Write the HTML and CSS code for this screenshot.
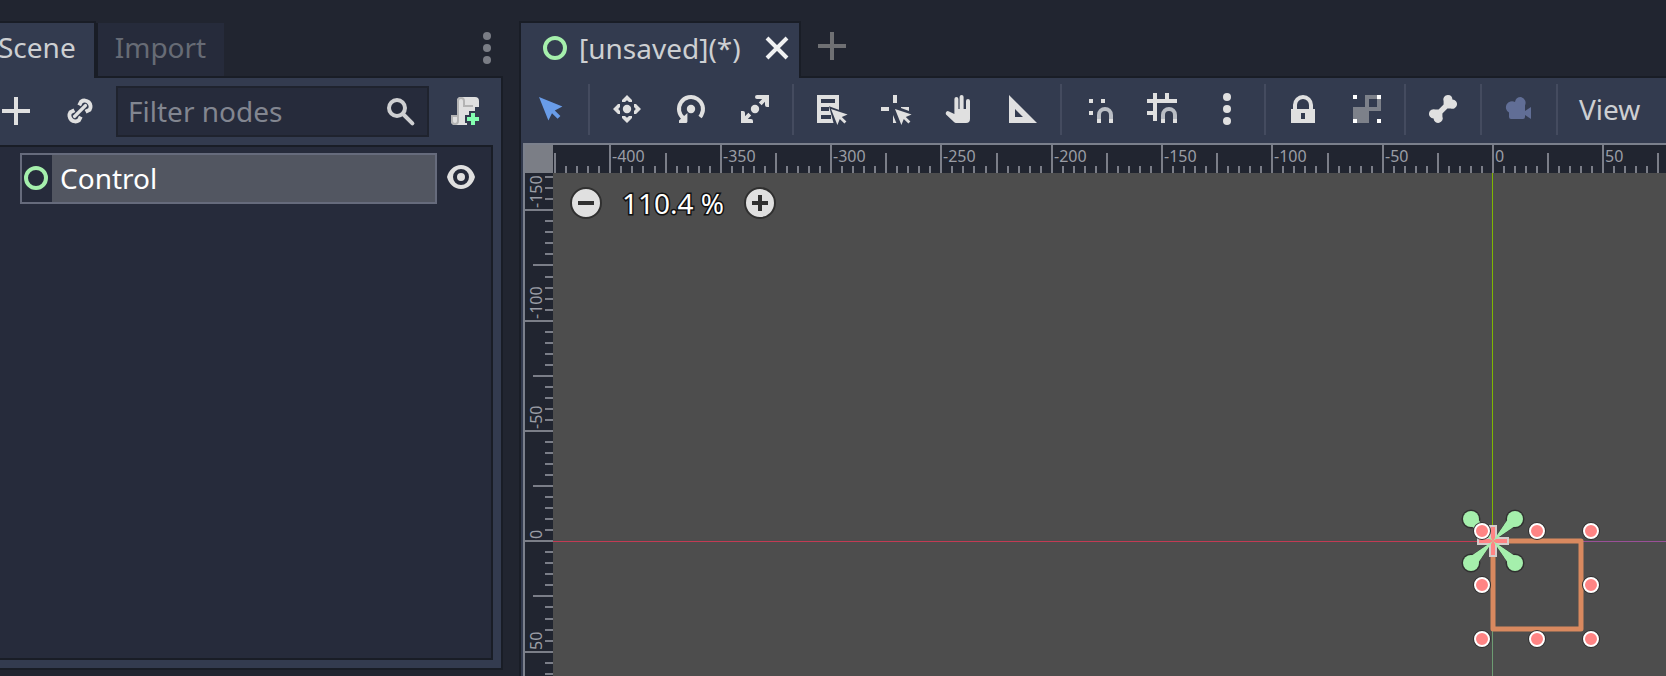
FILE: index.html
```html
<!DOCTYPE html>
<html lang="en">
<head>
<meta charset="utf-8">
<title>Scene editor</title>
<link rel="stylesheet" href="styles.css">
</head>
<body>
<main class="editor">
  <section class="dock" aria-label="Scene dock">
    <nav class="tabs">
      <button class="tab tab-active tab-scene">Scene</button>
      <button class="tab tab-idle">Import</button>
      <span class="tab-rest">
        <button class="icon-btn dim" aria-label="Dock options"><svg class="icon" viewBox="0 0 16 16"><circle cx="8" cy="2" r="2"/><circle cx="8" cy="8" r="2"/><circle cx="8" cy="14" r="2"/></svg></button>
      </span>
    </nav>
    <div class="dock-body">
      <div class="dock-tools">
        <button class="icon-btn" aria-label="Add node"><svg class="icon" viewBox="0 0 16 16"><path d="M7 1h2v6h6v2H9v6H7V9H1V7h6z"/></svg></button>
        <button class="icon-btn" aria-label="Instance scene"><svg class="icon" viewBox="0 0 16 16"><g fill="none" stroke="currentColor" stroke-width="2"><path d="M7.600 5.200 8.600 3.300A3 3 0 0 1 12.800 7.400L10.800 8.400"/><path d="M8.400 10.800 7.400 12.700A3 3 0 0 1 3.200 8.600L5.200 7.600"/><path d="M5.300 10.700 10.700 5.300" stroke-linecap="round" stroke-width="1.700"/></g></svg></button>
        <label class="filter">
          <input class="filter-input" type="text" placeholder="Filter nodes" aria-label="Filter nodes">
          <svg class="icon search" viewBox="0 0 16 16"><g fill="none" stroke="currentColor" stroke-width="2"><circle cx="6" cy="6" r="4"/><path d="m9 9 4.700 4.700" stroke-linecap="round"/></g></svg>
        </label>
        <button class="icon-btn" aria-label="Attach script"><svg class="icon" viewBox="0 0 16 16"><path d="M6 1a2 2 0 0 0-2 2v7H1v3a2 2 0 0 0 2 2h6v-5h1V9h1V8h2V6h2V3a2 2 0 0 0-2-2z"/><path class="ink-shade" fill-rule="evenodd" d="M6 1a2 2 0 0 0-2 2v7H1v3a2 2 0 0 0 4 0V3a1 1 0 0 1 2 0v3h5V5H8V3a2 2 0 0 0-2-2zM2 11h2v2a1 1 0 0 1-2 0z"/><path class="ink-add" d="M11 9h2v2h2v2h-2v2h-2v-2H9v-2h2z"/></svg></button>
      </div>
      <ul class="tree">
        <li class="tree-row">
          <button class="tree-item"><span class="tree-icon"><svg class="icon node" viewBox="0 0 16 16"><circle cx="8" cy="8" r="5"/></svg></span><span class="tree-name">Control</span></button>
          <button class="icon-btn eye" aria-label="Toggle visibility"><svg class="icon" viewBox="0 0 16 16"><path fill-rule="evenodd" d="M8 2C4.500 2 1.900 4.700 1 8c.9 3.300 3.500 6 7 6s6.100-2.700 7-6c-.9-3.300-3.500-6-7-6zm0 2a4 4 0 1 1 0 8 4 4 0 0 1 0-8zm0 2a2 2 0 1 0 0 4 2 2 0 0 0 0-4z"/></svg></button>
        </li>
      </ul>
    </div>
  </section>

  <section class="workspace" aria-label="2D workspace">
    <nav class="tabs">
      <div class="tab tab-active tab-file">
        <svg class="icon node" viewBox="0 0 16 16"><circle cx="8" cy="8" r="5"/></svg>
        <span class="file-name">[unsaved](*)</span>
        <button class="icon-btn close" aria-label="Close tab"><svg class="icon" viewBox="0 0 16 16"><path d="m3 3 10 10M13 3 3 13" stroke="currentColor" stroke-width="2"/></svg></button>
      </div>
      <span class="tab-rest tab-rest-start">
        <button class="icon-btn dim" aria-label="New scene"><svg class="icon" viewBox="0 0 16 16"><path d="M7 1h2v6h6v2H9v6H7V9H1V7h6z"/></svg></button>
      </span>
    </nav>
    <div class="toolbar" role="toolbar" aria-label="Canvas tools">
      <div class="group group-first">
        <button class="icon-btn active" aria-label="Select"><svg class="icon" viewBox="0 0 16 16"><path d="m2 2 4.700 11.700 1.800-3.600 2.800 2.800 1.400-1.400L9.900 8.700l3.800-1.900z"/></svg></button>
      </div>
      <div class="group">
        <button class="icon-btn" aria-label="Move"><svg class="icon" viewBox="0 0 16 16"><circle cx="8" cy="8" r="2.100"/><path d="M8 1 5.500 3.500v1H7L8 3.600l1 .9h1.500v-1zM8 15l2.500-2.500v-1H9l-1 .9-1-.9H5.500v1zM1 8l2.500 2.500h1V9L3.600 8l.9-1V5.500h-1zM15 8l-2.500-2.500h-1V7l.9 1-.9 1v1.500h1z"/></svg></button>
        <button class="icon-btn" aria-label="Rotate"><svg class="icon" viewBox="0 0 16 16"><circle cx="8" cy="8" r="2.100"/><path d="M4.500 12.900A6 6 0 1 1 13.200 11M13.200 11a6 6 0 0 1-.7 1" fill="none" stroke="currentColor" stroke-width="2"/><path d="M6.200 10v4.200a.8.8 0 0 1-.8.8H2v-1.300z"/></svg></button>
        <button class="icon-btn" aria-label="Scale"><svg class="icon" viewBox="0 0 16 16"><circle cx="8" cy="8" r="2.100"/><path d="M9 1h6v6h-1a1 1 0 0 1-1-1V4.400l-1.700 1.700-1.400-1.400L11.600 3H9a1 1 0 0 1-1-1 1 1 0 0 1 1-1zM7 15H1V9h1a1 1 0 0 1 1 1v1.600l1.700-1.700 1.400 1.400L4.400 13H6a1 1 0 0 1 1 1z"/></svg></button>
      </div>
      <div class="group">
        <button class="icon-btn" aria-label="List selection"><svg class="icon" viewBox="0 0 16 16"><path d="M1 1h11v14H1z"/><path class="ink-gap" d="M3 3h7v2H3zM3 7h4v2H3zM3 11h5v2H3zM7 6.600 12.500 8.600V15.500H9.400z"/><path d="m8 8 3.200 8 1.200-3 2.300 2.300 1-1-2.300-2.300 2.900-1.200z"/></svg></button>
        <button class="icon-btn" aria-label="Change pivot"><svg class="icon" viewBox="0 0 16 16"><path d="M7 1h2v4H7zM1 7h4v2H1zM11 7h4v2l-4-1.500zM7 11l1.700 4H7z"/><path d="m8 8 3.200 8 1.200-3 2.300 2.300 1-1-2.300-2.300 2.900-1.200z"/></svg></button>
        <button class="icon-btn" aria-label="Pan"><svg class="icon" viewBox="0 0 16 16"><path d="M9.300 1a1 1 0 0 0-1 1v6h-.6V3a1 1 0 0 0-2 0v7.500L3 9.200a1.100 1.100 0 0 0-1.500 1.500L5.500 14.500c.4.400.7.500 1.200.500H11.500a2 2 0 0 0 2-2V4a1 1 0 0 0-2 0v4h-.6l-.6 0V2a1 1 0 0 0-1-1z"/></svg></button>
        <button class="icon-btn" aria-label="Ruler"><svg class="icon" viewBox="0 0 16 16"><path fill-rule="evenodd" d="M1 1v14h14zm3 7 4 4H4z"/></svg></button>
      </div>
      <div class="group">
        <button class="icon-btn" aria-label="Smart snap"><svg class="icon" viewBox="0 0 16 16"><path d="M3 3h2v2H3zM9 3h2v2H9zM3 9h2v2H3zM7 13h2v2H7zM13 13h2v2h-2z"/><path class="ink-soft" d="M7 13v-2a4 4 0 0 1 8 0v2h-2v-2a2 2 0 0 0-4 0v2z"/></svg></button>
        <button class="icon-btn" aria-label="Grid snap"><svg class="icon" viewBox="0 0 16 16"><path d="M3 0h2v3h4V0h2v3h4v2H5v9H3v-3H0V9h3V5H0V3h3zM7 13h2v2H7zM13 13h2v2h-2z"/><path class="ink-soft" d="M7 13v-2a4 4 0 0 1 8 0v2h-2v-2a2 2 0 0 0-4 0v2z"/></svg></button>
        <button class="icon-btn" aria-label="Snap options"><svg class="icon" viewBox="0 0 16 16"><circle cx="8" cy="2" r="2"/><circle cx="8" cy="8" r="2"/><circle cx="8" cy="14" r="2"/></svg></button>
      </div>
      <div class="group">
        <button class="icon-btn" aria-label="Lock"><svg class="icon" viewBox="0 0 16 16"><path fill-rule="evenodd" d="M8 1a5 5 0 0 0-5 5v2H2v7h12V8h-1V6a5 5 0 0 0-5-5zm0 2a3 3 0 0 1 3 3v2H5V6a3 3 0 0 1 3-3zM7 10h2v3H7z"/></svg></button>
        <button class="icon-btn" aria-label="Group"><svg class="icon" viewBox="0 0 16 16"><path class="ink-grey" fill-rule="evenodd" d="M7 1h8v8H9v6H1V7h6zm2 2v4h4V3z"/><path class="ink-white" d="M1 1h2v2H1zM13 1h2v2h-2zM1 13h2v2H1zM13 13h2v2h-2z"/></svg></button>
      </div>
      <div class="group">
        <button class="icon-btn" aria-label="Skeleton"><svg class="icon" viewBox="0 0 16 16"><path d="M10.500 1a2.300 2.300 0 0 0-2.200 3.200v1.600L5.800 8.300H4.200a2.300 2.300 0 1 0-.9 4.400 2.300 2.300 0 1 0 4.400-1v-1.500l2.500-2.500h1.600a2.300 2.300 0 1 0 .9-4.400A2.300 2.300 0 0 0 10.500 1z"/></svg></button>
      </div>
      <div class="group">
        <button class="icon-btn off" aria-label="Override camera" disabled><svg class="icon" viewBox="0 0 16 16"><path d="M9 2a3 3 0 0 0-3 2.500A3 3 0 1 0 3 9.800V12a1 1 0 0 0 1 1h6a1 1 0 0 0 1-1v-1l3 2V7l-3 2V6.200A3 3 0 0 0 9 2z"/></svg></button>
      </div>
      <div class="group">
        <button class="view-menu">View</button>
      </div>
    </div>
    <div class="viewport">
      <div class="corner"></div>
      <svg class="ruler" id="ruler-x"></svg>
      <svg class="ruler" id="ruler-y"></svg>
      <div class="canvas">
        <svg class="scene" id="scene"></svg>
        <div class="zoom">
          <button class="zoom-btn" aria-label="Zoom out"><svg class="icon" viewBox="0 0 16 16"><circle class="disc" cx="8" cy="8" r="7.500"/><path d="M4 7h8v2H4z"/></svg></button>
          <button class="zoom-value">110.4 %</button>
          <button class="zoom-btn" aria-label="Zoom in"><svg class="icon" viewBox="0 0 16 16"><circle class="disc" cx="8" cy="8" r="7.500"/><path d="M7 4h2v3h3v2H9v3H7V9H4V7h3z"/></svg></button>
        </div>
      </div>
    </div>
  </section>
</main>
<script src="viewport.js"></script>
</body>
</html>
```
FILE: viewport.js
```js
const NS = "http://www.w3.org/2000/svg";
const SCALE = 2.2065;            // screen pixels per scene unit
const PAN = { x: 940, y: 368.3 }; // scene origin inside the canvas

function add(parent, tag, attrs, text) {
  const el = document.createElementNS(NS, tag);
  for (const key in attrs) el.setAttribute(key, attrs[key]);
  if (text !== undefined) el.textContent = text;
  parent.append(el);
  return el;
}

function drawRuler(svg, origin, vertical) {
  const length = vertical ? svg.clientHeight : svg.clientWidth;
  svg.replaceChildren();
  const first = Math.ceil((-origin - 1) / SCALE / 5);
  const last = Math.floor((length - origin) / SCALE / 5);
  for (let i = first; i <= last; i++) {
    const unit = i * 5;
    const at = Math.round(origin + unit * SCALE) - 1;
    const start = unit % 50 === 0 ? 0 : unit % 25 === 0 ? 8 : 21;
    const from = vertical && start === 21 ? 20 : start;
    add(svg, "rect", vertical
      ? { x: from, y: at, width: 28 - from, height: 2 }
      : { x: at, y: from, width: 2, height: 28 - from });
  }
  for (let unit = Math.ceil(first / 10) * 50; unit <= last * 5; unit += 50) {
    const at = Math.round(origin + unit * SCALE);
    add(svg, "text", vertical
      ? { transform: `translate(17 ${at - 2}) rotate(-90)` }
      : { x: at + 2, y: 17 }, unit);
  }
}

function drawScene(svg) {
  svg.replaceChildren();
  const x = Math.round(PAN.x), y = Math.round(PAN.y);
  const w = svg.clientWidth, h = svg.clientHeight, size = 88;
  add(svg, "rect", { class: "axis-x", x: 0, y, width: x, height: 1 });
  add(svg, "rect", { class: "axis-x-edge", x, y, width: w - x, height: 1 });
  add(svg, "rect", { class: "axis-y", x: x - 1, y: 0, width: 1, height: y });
  add(svg, "rect", { class: "axis-y-edge", x: x - 1, y, width: 1, height: h - y });
  add(svg, "rect", { class: "selection", x, y, width: size, height: size });

  const diagonals = [[-1, -1], [1, -1], [-1, 1], [1, 1]];
  const rayShape = "M0 0 15 22 22 15z";
  for (const [dx, dy] of diagonals) {
    const a = add(svg, "g", { class: "anchor", transform: `translate(${x} ${y}) scale(${dx} ${dy})` });
    add(a, "path", { class: "ray-shade", d: rayShape });
    add(a, "circle", { cx: 22, cy: 22, r: 8 });
  }
  const pivot = add(svg, "g", { transform: `translate(${x} ${y})` });
  add(pivot, "path", { class: "pivot-edge", d: "M-4-16h8v12h12v8H4v12h-8V4h-12v-8h12z" });
  add(pivot, "path", { class: "pivot-core", d: "M-2-14h4v12h12v4H2v12h-4V2h-12v-4h12z" });
  for (const [dx, dy] of diagonals)
    add(svg, "path", { class: "ray", d: rayShape, transform: `translate(${x} ${y}) scale(${dx} ${dy})` });

  const m = size / 2;
  for (const [hx, hy] of [[-11, -10], [m, -10], [98, -10], [-11, m], [98, m], [-11, 98], [m, 98], [98, 98]]) {
    add(svg, "circle", { class: "handle-shade", cx: x + hx, cy: y + hy, r: 9 });
    add(svg, "circle", { class: "handle", cx: x + hx, cy: y + hy, r: 7 });
  }
}

function draw() {
  drawRuler(document.getElementById("ruler-x"), PAN.x, false);
  drawRuler(document.getElementById("ruler-y"), PAN.y, true);
  drawScene(document.getElementById("scene"));
}
draw();
window.addEventListener("resize", draw);
```
FILE: styles.css
```css
* { box-sizing: border-box; }
html, body { height: 100%; }
body {
  margin: 0;
  background: #212530;
  color: #cdcfd2;
  font: 28px/38px "Noto Sans", sans-serif;
  overflow: hidden;
}
button, input { font: inherit; color: inherit; background: none; border: 0; padding: 0; margin: 0; }
.icon { display: block; width: 32px; height: 32px; fill: currentColor; overflow: visible; flex: none; }
.icon-btn { display: block; flex: none; color: #e0e0e0; }
.icon-btn.dim { color: #7a7d85; }
.icon-btn.active { color: #699ce8; }
.icon-btn.off { color: #616e96; }
.node circle { fill: none; stroke: #a5efac; stroke-width: 2; }
.ink-shade { fill: #b4b4b4; }
.ink-add { fill: #84ffb1; stroke: #333b4f; stroke-width: 2; paint-order: stroke; }
.ink-gap { fill: #333b4f; }
.ink-soft { fill: #b9bdc4; }
.ink-grey { fill: #7d818a; }
.ink-white { fill: #fff; }

.editor { display: flex; gap: 16px; height: 100%; padding-top: 21px; }
.dock { display: flex; flex-direction: column; flex: 0 0 503px; min-width: 0; padding-bottom: 6px; }
.workspace { display: flex; flex-direction: column; flex: 1; min-width: 0; }

.tabs { display: flex; height: 57px; }
.tab { height: 57px; border: solid #191d26; border-width: 2px 2px 0 0; }
.tab-active { background: #333b4f; }
.tab-scene { padding: 0 18px 8px 0; text-indent: -2px; }
.tab-idle {
  padding: 0 18px 6px 17px;
  border-width: 0 0 2px 2px;
  color: #676b75;
  background: #262b3b;
  margin-top: 2px;
  height: 55px;
}
.tab-rest {
  display: flex;
  flex: 1;
  align-items: flex-start;
  justify-content: flex-end;
  border-bottom: 2px solid #191d26;
  padding-top: 11px;
}
.tab-rest-start { justify-content: flex-start; padding: 9px 0 0 15px; }
.tab-rest-start .dim { color: #6f7073; }
.tab-file { display: flex; align-items: flex-start; padding: 9px 6px 0 18px; border-left-width: 2px; }
.file-name { padding: 0 20px 0 8px; line-height: 32px; }
.close { color: #f0f1f2; }

.dock-body {
  flex: 1;
  display: flex;
  flex-direction: column;
  padding: 8px 8px 8px 0;
  background: #333b4f;
  border: solid #191d26;
  border-width: 0 2px 2px 0;
}
.dock-tools { display: flex; align-items: center; height: 51px; padding-right: 12px; }
.dock-tools .icon-btn { padding-bottom: 1px; }
.dock-tools .icon-btn + .icon-btn { margin-left: 32px; }
.filter {
  display: flex;
  flex: 1;
  align-items: center;
  min-width: 0;
  height: 51px;
  margin: 0 20px;
  padding: 0 10px;
  background: #262b3b;
  border: 2px solid #1f232e;
}
.search { color: #cfd0d2; }
.filter-input { flex: 1; min-width: 0; height: 38px; padding-bottom: 2px; outline: 0; }
.filter-input::placeholder { color: #828690; opacity: 1; }
.tree {
  flex: 1;
  list-style: none;
  margin: 8px 0 0;
  padding: 6px 14px 0 20px;
  background: #262b3b;
  border: solid #191d26;
  border-width: 2px 2px 2px 0;
}
.tree-row { display: flex; align-items: center; gap: 8px; }
.tree-item {
  display: flex;
  flex: 1;
  align-items: center;
  height: 51px;
  border: 2px solid #666b7c;
  background: #525661;
  color: #fff;
  text-align: left;
}
.tree-icon { display: flex; align-items: center; justify-content: center; width: 30px; height: 47px; padding: 0 2px 2px 0; background: #262b3b; }
.tree-name { padding: 0 0 2px 8px; }
.eye { padding-bottom: 3px; }

.toolbar {
  display: flex;
  align-items: center;
  height: 65px;
  padding-bottom: 2px;
  background: #333b4f;
  border-left: 2px solid #191d26;
}
.group { display: flex; align-items: center; gap: 32px; height: 51px; padding: 0 21px 2px; }
.group + .group { border-left: 2px solid #444b5f; }
.group-first { padding-left: 14px; }
.view-menu { color: #cdcfd2; }

.viewport {
  flex: 1;
  min-height: 0;
  display: grid;
  grid-template: 28px minmax(0, 1fr) / 28px minmax(0, 1fr);
  border: solid #7b808c;
  border-width: 2px 0 0 2px;
  margin-left: 4px;
  box-shadow: -2px 0 #333b4f, -4px 0 #191d26;
  background: #212530;
}
.corner { background: #7b7e86; }
.ruler { width: 100%; height: 100%; overflow: hidden; fill: #7b7e88; font-size: 16px; line-height: 20px; }
.ruler text { fill: #9a9da5; }
.canvas { position: relative; background: #4d4d4d; overflow: hidden; }
.scene { position: absolute; inset: 0; width: 100%; height: 100%; }
.axis-x { fill: #c23b54; }
.axis-x-edge { fill: #9a5098; }
.axis-y { fill: #7fb700; }
.axis-y-edge { fill: #6c9c72; }
.selection { fill: none; stroke: #d9895f; stroke-width: 5; stroke-linejoin: round; }
.anchor { fill: #a5efac; }
.anchor circle { stroke: #303030; stroke-width: 3; paint-order: stroke; }
.ray-shade { stroke: #303030; stroke-width: 1; }
.ray { fill: #a5efac; }
.pivot-edge { fill: #d3cccc; }
.pivot-core { fill: #ff8484; }
.handle-shade { fill: #303030; }
.handle { fill: #ff8484; stroke: #fff; stroke-width: 2; }
.zoom { position: relative; display: flex; align-items: center; padding: 11px 17px; }
.zoom-btn { color: #303030; }
.disc { fill: #e0e0e0; stroke: #303030; stroke-width: 1; }
.zoom-value { padding: 0 20px; color: #fff; -webkit-text-stroke: 3px #111; paint-order: stroke fill; }
```
